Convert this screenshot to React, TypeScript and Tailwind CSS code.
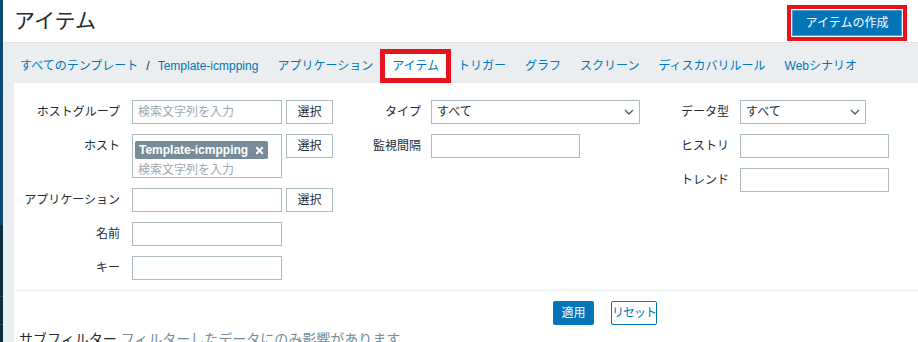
import React from 'react';

const font = { fontFamily: '"Liberation Sans", "Noto Sans CJK JP", sans-serif' };

const Chevron = () => (
  <svg width="10" height="6" viewBox="0 0 10 6" className="text-[#4f5a60]">
    <path d="M1 1l4 4 4-4" fill="none" stroke="currentColor" strokeWidth="1.3" />
  </svg>
);

const TextInput = ({ w = 'w-[150px]' }: { w?: string }) => (
  <div className={`${w} h-[24px] border border-[#acbbc2] bg-white`} />
);

const SelectBtn = () => (
  <button className="ml-[4px] w-[47px] h-[24px] border border-[#acbbc2] bg-white text-[12px] text-[#1f2c33]">選択</button>
);

const Dropdown = ({ w }: { w: string }) => (
  <div className={`${w} h-[24px] border border-[#acbbc2] bg-white flex items-center justify-between pl-[5px] pr-[5px] text-[12px] text-[#1f2c33]`}>
    <span>すべて</span>
    <Chevron />
  </div>
);

const Row = ({ label, lw, gap, children }: { label: string; lw: string; gap: string; children: React.ReactNode }) => (
  <div className="flex items-start">
    <div className={`${lw} ${gap} text-right text-[12px] leading-[24px] text-[#1f2c33] shrink-0`}>{label}</div>
    <div className="flex items-start">{children}</div>
  </div>
);

export default function App() {
  const tabs = ['トリガー', 'グラフ', 'スクリーン', 'ディスカバリルール', 'Webシナリオ'];
  return (
    <div className="flex w-[918px] h-[342px] overflow-hidden bg-[#ebeef0]" style={font}>
      {/* sidebar edge */}
      <div className="w-[3px] shrink-0 flex flex-col">
        <div className="h-[225px] bg-[#0d4a6e]" />
        <div className="flex-1 bg-[#0c2d40] flex flex-col">
          <div className="h-[72px] border-b border-[#2a4b5e]" />
          <div className="h-[28px] border-b border-[#2a4b5e]" />
        </div>
      </div>

      <div className="flex-1 flex flex-col min-w-0">
        {/* header */}
        <div className="h-[43px] bg-white border-b border-[#dfe4e7] flex items-center justify-between pl-[11px] pr-[11px] shrink-0">
          <h1 className="text-[21px] text-[#1f2c33] leading-none mb-[2px]">アイテム</h1>
          <div className="border-[4px] border-[#e8141d] p-[1px] mt-[4px]">
            <button className="h-[26px] w-[110px] bg-[#0275b8] border border-[#4d9ed0] text-white text-[12px]">アイテムの作成</button>
          </div>
        </div>

        {/* nav */}
        <div className="h-[40px] shrink-0 flex items-center pt-[6px] pl-[10px] gap-[5px] text-[12px] text-[#0275b8] whitespace-nowrap">
          <div className="px-[7px] flex items-center">
            <span>すべてのテンプレート</span>
            <span className="mx-[8px] text-[#1f2c33]">/</span>
            <span>Template-icmpping</span>
          </div>
          <span className="px-[7px]">アプリケーション</span>
          <span className="px-[7px] h-[24px] leading-[24px] bg-white outline-[5px] outline-solid outline-[#e8141d]">アイテム</span>
          {tabs.map((t) => (
            <span key={t} className="px-[7px]">{t}</span>
          ))}
        </div>

        {/* filter panel */}
        <div className="ml-[11px] flex-1 bg-white flex flex-col">
          <div className="flex pt-[17px] pb-[10px]">
            <div className="w-[326px] flex flex-col gap-[10px] shrink-0">
              <Row label="ホストグループ" lw="w-[106px]" gap="mr-[12px]">
                <div className="w-[150px] h-[24px] border border-[#acbbc2] text-[12px] leading-[22px] pl-[5px] text-[#9aa9b0]">検索文字列を入力</div>
                <SelectBtn />
              </Row>
              <Row label="ホスト" lw="w-[106px]" gap="mr-[12px]">
                <div className="w-[150px] h-[44px] border border-[#acbbc2] pt-[2px] pl-[2px]">
                  <div className="inline-flex items-center h-[18px] bg-[#768d99] text-white text-[12px] font-bold px-[4px] rounded-[2px]">
                    Template-icmpping
                    <svg width="9" height="9" viewBox="0 0 10 10" className="ml-[7px]">
                      <path d="M2 2l6 6M8 2l-6 6" stroke="white" strokeWidth="2.2" strokeLinecap="round" />
                    </svg>
                  </div>
                  <div className="text-[12px] leading-[18px] pl-[3px] text-[#9aa9b0]">検索文字列を入力</div>
                </div>
                <SelectBtn />
              </Row>
              <Row label="アプリケーション" lw="w-[106px]" gap="mr-[12px]">
                <TextInput />
                <SelectBtn />
              </Row>
              <Row label="名前" lw="w-[106px]" gap="mr-[12px]">
                <TextInput />
              </Row>
              <Row label="キー" lw="w-[106px]" gap="mr-[12px]">
                <TextInput />
              </Row>
            </div>

            <div className="w-[310px] flex flex-col gap-[10px] shrink-0">
              <Row label="タイプ" lw="w-[81px]" gap="mr-[10px]">
                <Dropdown w="w-[209px]" />
              </Row>
              <Row label="監視間隔" lw="w-[81px]" gap="mr-[10px]">
                <TextInput w="w-[149px]" />
              </Row>
            </div>

            <div className="flex flex-col gap-[10px]">
              <Row label="データ型" lw="w-[79px]" gap="mr-[11px]">
                <Dropdown w="w-[126px]" />
              </Row>
              <Row label="ヒストリ" lw="w-[79px]" gap="mr-[11px]">
                <TextInput w="w-[149px]" />
              </Row>
              <Row label="トレンド" lw="w-[79px]" gap="mr-[11px]">
                <TextInput w="w-[149px]" />
              </Row>
            </div>
          </div>

          <div className="ml-[2px] border-t border-[#ebeef0] pt-[10px] flex pl-[537px] gap-[17px]">
            <button className="h-[24px] w-[41px] rounded-[2px] bg-[#0275b8] text-white text-[12px]">適用</button>
            <button className="h-[24px] w-[46px] rounded-[2px] border border-[#0275b8] bg-white text-[#0275b8] text-[12px] whitespace-nowrap tracking-[-1px]">リセット</button>
          </div>

          <div className="mt-[6px] pl-[5px] text-[14px] leading-[16px] whitespace-nowrap">
            <span className="text-[#1f2c33]">サブフィルター</span>{' '}
            <span className="text-[#768d99]">フィルターしたデータにのみ影響があります</span>
          </div>
        </div>
      </div>
    </div>
  );
}
